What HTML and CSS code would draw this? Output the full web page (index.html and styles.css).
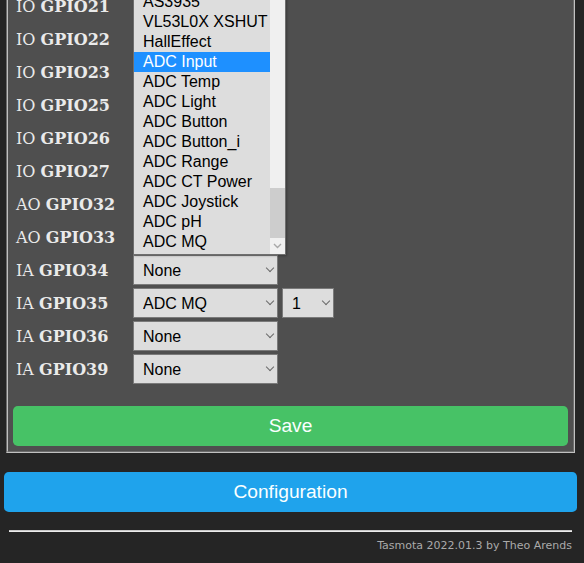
FILE: index.html
```html
<!DOCTYPE html>
<html>
<head>
<meta charset="utf-8">
<link rel="stylesheet" href="styles.css">
</head>
<body>
<div class="wrap">
  <fieldset class="box">
    <div class="grid">
      <div class="lbl"><span>IO <b>GPIO21</b></span></div><div class="cell"><span class="sw"><select class="sel"><option>None</option></select></span></div>
      <div class="lbl"><span>IO <b>GPIO22</b></span></div><div class="cell"><span class="sw"><select class="sel"><option>None</option></select></span></div>
      <div class="lbl"><span>IO <b>GPIO23</b></span></div><div class="cell"><span class="sw"><select class="sel"><option>None</option></select></span></div>
      <div class="lbl"><span>IO <b>GPIO25</b></span></div><div class="cell"><span class="sw"><select class="sel"><option>None</option></select></span></div>
      <div class="lbl"><span>IO <b>GPIO26</b></span></div><div class="cell"><span class="sw"><select class="sel"><option>None</option></select></span></div>
      <div class="lbl"><span>IO <b>GPIO27</b></span></div><div class="cell"><span class="sw"><select class="sel"><option>None</option></select></span></div>
      <div class="lbl"><span>AO <b>GPIO32</b></span></div><div class="cell"><span class="sw"><select class="sel"><option>None</option></select></span></div>
      <div class="lbl"><span>AO <b>GPIO33</b></span></div><div class="cell"><span class="sw"><select class="sel"><option>None</option></select></span></div>
      <div class="lbl"><span>IA <b>GPIO34</b></span></div><div class="cell"><span class="sw"><select class="sel"><option>None</option></select></span></div>
      <div class="lbl"><span>IA <b>GPIO35</b></span></div><div class="cell"><span class="sw"><select class="sel"><option>ADC MQ</option></select></span><span class="sw"><select class="sel idx"><option>1</option></select></span></div>
      <div class="lbl"><span>IA <b>GPIO36</b></span></div><div class="cell"><span class="sw"><select class="sel"><option>None</option></select></span></div>
      <div class="lbl"><span>IA <b>GPIO39</b></span></div><div class="cell"><span class="sw"><select class="sel"><option>None</option></select></span></div>
    </div>
    <button class="btn save">Save</button>
  </fieldset>
  <button class="btn conf">Configuration</button>
  <div class="foot">
    <hr class="rule">
    <span class="ver">Tasmota 2022.01.3 by Theo Arends</span>
  </div>
</div>

<div class="popup">
  <div class="list">
    <div class="opt">AS3935</div>
    <div class="opt">VL53L0X XSHUT</div>
    <div class="opt">HallEffect</div>
    <div class="opt hl">ADC Input</div>
    <div class="opt">ADC Temp</div>
    <div class="opt">ADC Light</div>
    <div class="opt">ADC Button</div>
    <div class="opt">ADC Button_i</div>
    <div class="opt">ADC Range</div>
    <div class="opt">ADC CT Power</div>
    <div class="opt">ADC Joystick</div>
    <div class="opt">ADC pH</div>
    <div class="opt">ADC MQ</div>
  </div>
  <div class="sb">
    <div class="thumb"></div>
    <div class="arrow">
      <svg width="9" height="6" viewBox="0 0 9 6"><path d="M1 1 L4.5 4.5 L8 1" fill="none" stroke="#a8a8a8" stroke-width="1.4"/></svg>
    </div>
  </div>
</div>
</body>
</html>
```

FILE: styles.css
```css
html, body {
  margin: 0;
  padding: 0;
}

body {
  background: #252525;
  font-family: "DejaVu Sans", Verdana, sans-serif;
  position: relative;
  overflow: hidden;
  height: 563px;
}

.wrap {
  margin-left: 4px;
  width: 573px;
  color: #eaeaea;
}

.box {
  margin: -12px 2px 0;
  padding: 1px 5px 5px;
  border: 2px groove #c0c0c0;
  background: #4f4f4f;
  min-width: 0;
}

.grid {
  display: grid;
  grid-template-columns: 120px auto;
  grid-auto-rows: 30px;
  row-gap: 3px;
}

.lbl {
  display: flex;
  align-items: center;
  padding-left: 3px;
  font-family: "DejaVu Serif", "Liberation Serif", serif;
  font-size: 16px;
  color: #eaeaea;
  white-space: nowrap;
}

.cell {
  display: flex;
  gap: 4px;
}

.sw {
  position: relative;
  display: block;
  height: 30px;
}

.sw::after {
  content: "";
  position: absolute;
  right: 5px;
  top: 10px;
  width: 5px;
  height: 5px;
  border-right: 1px solid #6a6a6a;
  border-bottom: 1px solid #6a6a6a;
  transform: rotate(45deg);
  pointer-events: none;
}

.sel {
  display: block;
  width: 145px;
  height: 30px;
  margin: 0;
  padding: 0 5px 0 9px;
  box-sizing: border-box;
  background: #dddddd;
  color: #000;
  border: 1px solid #7a7a7a;
  border-radius: 0;
  font-family: "Liberation Sans", Arial, sans-serif;
  font-size: 16px;
  appearance: none;
  -webkit-appearance: none;
}

.sel.idx {
  width: 52px;
}

.btn {
  display: block;
  width: 100%;
  height: 40px;
  border: 0;
  border-radius: 4.8px;
  color: #faffff;
  font-family: "Liberation Sans", Arial, sans-serif;
  font-size: 19.2px;
  padding: 0;
}

.save {
  margin-top: 22px;
  background: #47c266;
}

.conf {
  margin-top: 19px;
  background: #1fa3ec;
}

.foot {
  padding: 0 5px;
  text-align: right;
}

.rule {
  margin: 18px 0 0;
  height: 0;
  border: 0;
  border-top: 1px solid #c8c8c8;
  border-bottom: 1px solid #ececec;
}

.ver {
  display: block;
  margin-top: 7px;
  font-size: 11px;
  line-height: 13px;
  color: #aaaaaa;
}

.popup {
  position: absolute;
  left: 133px;
  top: -9px;
  width: 153px;
  height: 264px;
  box-sizing: border-box;
  border: 1px solid #6e6e6e;
  background: #dddddd;
  display: flex;
  box-shadow: 1px 1px 2px rgba(0, 0, 0, 0.25);
}

.list {
  width: 136px;
}

.opt {
  height: 20px;
  line-height: 20px;
  padding-left: 9px;
  font-family: "Liberation Sans", Arial, sans-serif;
  font-size: 16px;
  color: #000;
  white-space: nowrap;
}

.opt.hl {
  background: #1e90ff;
  color: #fff;
}

.sb {
  width: 15px;
  background: #f0f0f0;
  display: flex;
  flex-direction: column;
}

.thumb {
  margin-top: auto;
  height: 50px;
  background: #cdcdcd;
}

.arrow {
  height: 16px;
  display: flex;
  align-items: center;
  justify-content: center;
}
```
